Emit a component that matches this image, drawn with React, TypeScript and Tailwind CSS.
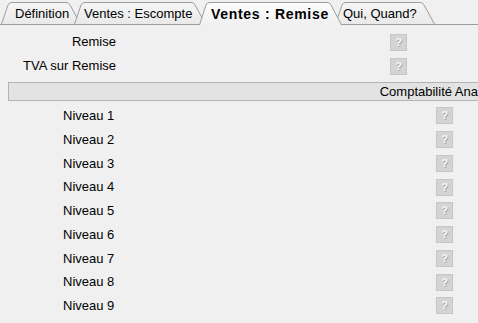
import React from 'react';

const TABS = [
  { label: 'Définition', width: 80, pl: 14, active: false },
  { label: 'Ventes : Escompte', width: 132, pl: 10, active: false },
  { label: 'Ventes : Remise', width: 143, pl: 12, active: true },
  { label: 'Qui, Quand?', width: 100, pl: 8, active: false },
];

const LEVELS = [1, 2, 3, 4, 5, 6, 7, 8, 9];

function Tab({ label, width, pl, active, index }: { label: string; width: number; pl: number; active: boolean; index: number }) {
  const h = active ? 23 : 22;
  const path = `M0.5,${h} L7,3 Q8,0.5 11,0.5 L${width - 15},0.5 Q${width - 12},0.5 ${width - 11},3 L${width - 0.5},${h}`;
  return (
    <div
      className={active ? 'relative h-[23px] -mb-px' : 'relative h-[22px]'}
      style={{ width, marginLeft: index === 0 ? 1 : -7, zIndex: active ? 20 : index + 1 }}
    >
      <svg className="absolute inset-0" width={width} height={h} viewBox={`0 0 ${width} ${h}`}>
        <defs>
          <linearGradient id={`tg${index}`} x1="0" y1="0" x2="0" y2="1">
            <stop offset="0" stopColor={active ? '#fdfdfd' : '#f6f6f6'} />
            <stop offset="1" stopColor={active ? '#f0f0f0' : '#e9e9e9'} />
          </linearGradient>
        </defs>
        <path d={path + ' Z'} fill={`url(#tg${index})`} stroke="none" />
        <path d={path} fill="none" stroke="#9c9c9c" strokeWidth="1" />
      </svg>
      <div
        className={
          active
            ? 'relative pt-[3px] text-[14px] font-bold tracking-[0.7px] leading-[18px] whitespace-nowrap'
            : 'relative pt-[3px] text-[13px] leading-[18px] whitespace-nowrap'
        }
        style={{ paddingLeft: pl }}
      >
        {label}
      </div>
    </div>
  );
}

function Help() {
  return (
    <div className="w-[17px] h-[17px] bg-[#d4d4d4] border border-[#c6c6c6] flex items-center justify-center text-[11px] font-bold leading-none text-[#f7f7f7] [text-shadow:1px_1px_0_#a9a9a9]">
      ?
    </div>
  );
}

export default function App() {
  return (
    <div className="w-[478px] h-[323px] overflow-hidden bg-[#f0f0f0] text-black font-['Liberation_Sans',Arial,sans-serif] text-[13px]">
      {/* tab strip */}
      <div className="relative h-[25px] pt-[2px] flex items-end border-b border-[#9c9c9c]">
        {TABS.map((t, i) => (
          <Tab key={t.label} {...t} index={i} />
        ))}
      </div>

      {/* sale discount fields */}
      <div className="pt-[5px]">
        {['Remise', 'TVA sur Remise'].map((l) => (
          <div key={l} className="h-[24px] flex items-center">
            <div className="w-[116px] text-right whitespace-nowrap">{l}</div>
            <div className="ml-[274px]">
              <Help />
            </div>
          </div>
        ))}
      </div>

      {/* section bar, cut by the window edge */}
      <div className="mt-[4px] ml-[8px] w-[470px] h-[19px] bg-[#e3e3e3] border border-r-0 border-[#b4b4b4] flex items-center justify-end overflow-hidden">
        <div className="whitespace-nowrap leading-none">Comptabilité Ana</div>
      </div>

      {/* analytic levels */}
      <div className="pt-[3px]">
        {LEVELS.map((n) => (
          <div key={n} className="h-[23.75px] flex items-center">
            <div className="pl-[63px] w-[436px] whitespace-nowrap">Niveau {n}</div>
            <Help />
          </div>
        ))}
      </div>
    </div>
  );
}
